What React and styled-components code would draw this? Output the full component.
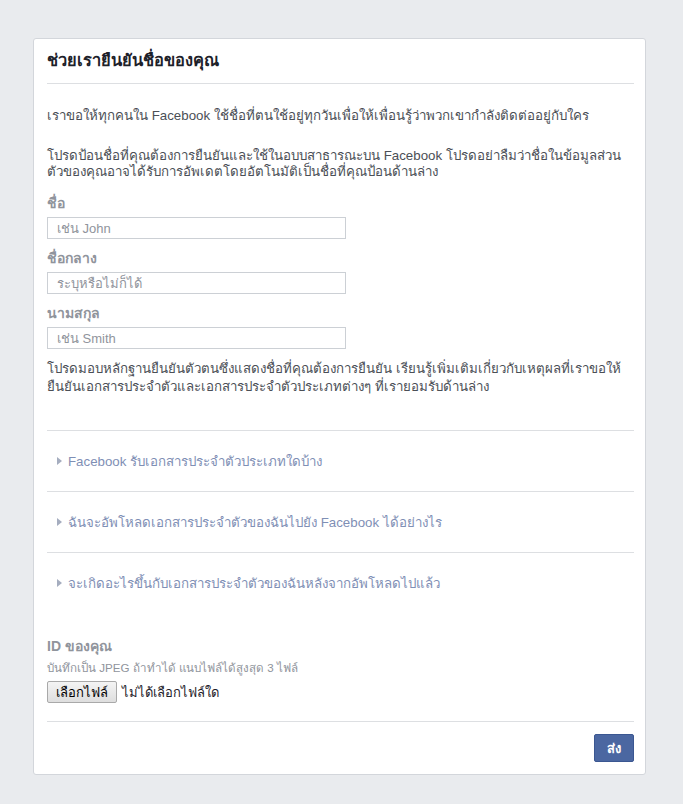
import React from "react";
import styled, { createGlobalStyle } from "styled-components";

const GlobalStyle = createGlobalStyle`
  body {
    margin: 0;
    background: #e9ebee;
    font-family: Tahoma, "Liberation Sans", "Noto Sans", sans-serif;
    font-size: 13.3px;
    color: #4b4f56;
  }
`

const Page = styled.div`
  padding: 38px 37px 30px 33px;
`

const Card = styled.div`
  background: #fff;
  border: 1px solid #d3d6db;
  border-radius: 3px;
  padding: 0 11px 12px 13px;
`

const Header = styled.div`
  border-bottom: 1px solid #dddfe2;
  padding: 10px 0 11px;
`

const Title = styled.h2`
  margin: 0;
  font-size: 16.4px;
  font-weight: bold;
  line-height: 23px;
  color: #1d2129;
`

const Body = styled.div`
  padding-top: 24px;
`

const Para = styled.p`
  margin: ${p => p.top || 0}px 0 ${p => p.gap || 0}px;
  line-height: ${p => p.lh || 16}px;
`

const Label = styled.div`
  font-weight: bold;
  font-size: 14px;
  color: #90949c;
  height: 18px;
  line-height: 18px;
  margin-top: ${p => p.top || 0}px;
  margin-bottom: 5px;
`

const Input = styled.input`
  display: block;
  box-sizing: border-box;
  width: 299px;
  height: 22px;
  border: 1px solid #ccd0d5;
  padding: 0 9px;
  font: inherit;
  font-size: 13px;
  color: #1d2129;
  outline: none;
  &::placeholder { color: #90949c; }
`

const Accordion = styled.div`
  margin-top: 34px;
  border-top: 1px solid #dddfe2;
`

const Item = styled.div`
  display: flex;
  align-items: center;
  gap: 6px;
  height: 60px;
  padding-left: 10px;
  color: #7f8fb5;
  border-bottom: ${p => (p.last ? "none" : "1px solid #dddfe2")};
`

const Arrow = styled.span`
  width: 0;
  height: 0;
  border-left: 5px solid #a5adbf;
  border-top: 4px solid transparent;
  border-bottom: 4px solid transparent;
`

const Upload = styled.div`
  padding: 24px 0 18px;
  border-bottom: 1px solid #dddfe2;
`

const Hint = styled.div`
  color: #90949c;
  font-size: 11.6px;
  line-height: 18px;
  margin-top: -1px;
  margin-bottom: 4px;
`

const FileRow = styled.div`
  display: flex;
  align-items: center;
  gap: 5px;
  color: #1d2129;
  font-size: 13px;
`

const FileButton = styled.button`
  height: 22px;
  padding: 0 8px;
  font: inherit;
  font-size: 13px;
  color: #000;
  background: linear-gradient(#f4f4f4, #dedede);
  border: 1px solid #a9a9a9;
  border-radius: 2px;
`

const Footer = styled.div`
  display: flex;
  justify-content: flex-end;
  padding-top: 12px;
`

const Submit = styled.button`
  width: 40px;
  height: 28px;
  background: #4b67a1;
  border: 1px solid #3b5791;
  border-radius: 2px;
  color: #fff;
  font: inherit;
  font-weight: bold;
  font-size: 13px;
`

const questions = [
  "Facebook รับเอกสารประจำตัวประเภทใดบ้าง",
  "ฉันจะอัพโหลดเอกสารประจำตัวของฉันไปยัง Facebook ได้อย่างไร",
  "จะเกิดอะไรขึ้นกับเอกสารประจำตัวของฉันหลังจากอัพโหลดไปแล้ว",
]

const App = () => {
  return (
    <>
      <GlobalStyle />
      <Page>
        <Card>
          <Header>
            <Title>ช่วยเรายืนยันชื่อของคุณ</Title>
          </Header>
          <Body>
            <Para gap={24}>เราขอให้ทุกคนใน Facebook ใช้ชื่อที่ตนใช้อยู่ทุกวันเพื่อให้เพื่อนรู้ว่าพวกเขากำลังติดต่ออยู่กับใคร</Para>
            <Para gap={14}>โปรดป้อนชื่อที่คุณต้องการยืนยันและใช้ในอบบสาธารณะบน Facebook โปรดอย่าลืมว่าชื่อในข้อมูลส่วนตัวของคุณอาจได้รับการอัพเดตโดยอัตโนมัติเป็นชื่อที่คุณป้อนด้านล่าง</Para>
            <Label>ชื่อ</Label>
            <Input placeholder="เช่น John" />
            <Label top={10}>ชื่อกลาง</Label>
            <Input placeholder="ระบุหรือไม่ก็ได้" />
            <Label top={10}>นามสกุล</Label>
            <Input placeholder="เช่น Smith" />
            <Para top={11} lh={18}>โปรดมอบหลักฐานยืนยันตัวตนซึ่งแสดงชื่อที่คุณต้องการยืนยัน เรียนรู้เพิ่มเติมเกี่ยวกับเหตุผลที่เราขอให้ยืนยันเอกสารประจำตัวและเอกสารประจำตัวประเภทต่างๆ ที่เรายอมรับด้านล่าง</Para>
          </Body>
          <Accordion>
            {questions.map((q, i) => (
              <Item key={i} last={i === questions.length - 1}>
                <Arrow />
                <span>{q}</span>
              </Item>
            ))}
          </Accordion>
          <Upload>
            <Label>ID ของคุณ</Label>
            <Hint>บันทึกเป็น JPEG ถ้าทำได้ แนบไฟล์ได้สูงสุด 3 ไฟล์</Hint>
            <FileRow>
              <FileButton>เลือกไฟล์</FileButton>
              <span>ไม่ได้เลือกไฟล์ใด</span>
            </FileRow>
          </Upload>
          <Footer>
            <Submit>ส่ง</Submit>
          </Footer>
        </Card>
      </Page>
    </>
  )
}

export default App;
